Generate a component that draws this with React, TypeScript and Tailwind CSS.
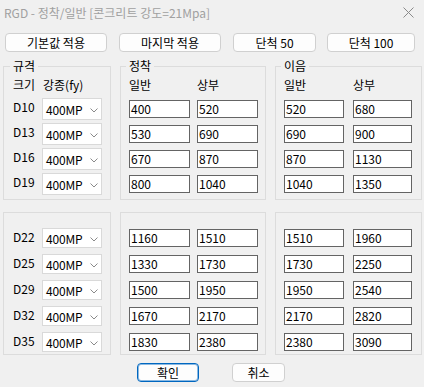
import React from 'react';

type Row = { d: string; a: [number, number]; b: [number, number] };

const upperRows: Row[] = [
  { d: 'D10', a: [400, 520], b: [520, 680] },
  { d: 'D13', a: [530, 690], b: [690, 900] },
  { d: 'D16', a: [670, 870], b: [870, 1130] },
  { d: 'D19', a: [800, 1040], b: [1040, 1350] },
];

const lowerRows: Row[] = [
  { d: 'D22', a: [1160, 1510], b: [1510, 1960] },
  { d: 'D25', a: [1330, 1730], b: [1730, 2250] },
  { d: 'D29', a: [1500, 1950], b: [1950, 2540] },
  { d: 'D32', a: [1670, 2170], b: [2170, 2820] },
  { d: 'D35', a: [1830, 2380], b: [2380, 3090] },
];

const Combo: React.FC<{ tall?: boolean }> = ({ tall }) => (
  <div
    className={`flex w-[60px] items-center justify-between border border-[#d9d9d9] bg-white pl-[3px] pr-[3px] ${
      tall ? 'h-[22px]' : 'h-[20px]'
    }`}
  >
    <span className="pt-[2px] leading-none tracking-[-0.2px]">400MP</span>
    <svg width="8" height="5" viewBox="0 0 8 5" className="mt-[3px]">
      <path d="M0.5 0.5 L4 4 L7.5 0.5" stroke="#8a8a8a" fill="none" strokeWidth="1" />
    </svg>
  </div>
);

const Edit: React.FC<{ value: number; w?: string }> = ({ value, w = 'w-[61px]' }) => (
  <div className={`flex h-[18px] ${w} items-center border border-[#646464] bg-white pl-[1px] leading-none`}>
    {value}
  </div>
);

const TopButton: React.FC<{ label: string; w: string }> = ({ label, w }) => (
  <button className={`h-[19px] ${w} rounded-[4px] border border-[#d0d0d0] bg-[#fdfdfd] leading-none text-black`}>
    {label}
  </button>
);

export default function App() {
  return (
    <div className="h-[387px] w-[424px] overflow-hidden bg-[#f0f0f0] font-['Noto_Sans_CJK_KR',sans-serif] text-[12px] text-black">
      {/* title bar */}
      <div className="flex h-[25px] items-center justify-between pl-[4px] pr-[10px] text-[#a0a0a0]">
        <span>RGD - 정착/일반 [콘크리트 강도=21Mpa]</span>
        <svg width="11" height="11" viewBox="0 0 11 11">
          <path d="M0.5 0.5 L10.5 10.5 M10.5 0.5 L0.5 10.5" stroke="#8a8a8a" strokeWidth="1" />
        </svg>
      </div>

      {/* preset buttons */}
      <div className="mt-[8px] flex pl-[5px]">
        <TopButton label="기본값 적용" w="w-[102px]" />
        <div className="ml-[12px]">
          <TopButton label="마지막 적용" w="w-[102px]" />
        </div>
        <div className="ml-[12px]">
          <TopButton label="단척 50" w="w-[83px]" />
        </div>
        <div className="ml-[11px]">
          <TopButton label="단척 100" w="w-[88px]" />
        </div>
      </div>

      {/* upper groups */}
      <div className="mt-[6px] flex gap-[9px] pl-[3px]">
        <fieldset className="h-[142px] w-[108px] border border-[#dcdcdc] pl-[9px]">
          <legend className="-ml-[3px] px-[3px] leading-[16px]">규격</legend>
          <div className="mt-[3px] flex h-[16px] items-center">
            <span className="w-[30px]">크기</span>
            <span>강종(fy)</span>
          </div>
          <div className="mt-[5px] flex flex-col gap-[3px]">
            {upperRows.map((r) => (
              <div key={r.d} className="flex h-[22px] items-center">
                <span className="w-[29px] pb-[4px]">{r.d}</span>
                <Combo tall />
              </div>
            ))}
          </div>
        </fieldset>

        <fieldset className="h-[142px] w-[146px] border border-[#dcdcdc] pl-[8px]">
          <legend className="-ml-[3px] px-[3px] leading-[16px]">정착</legend>
          <div className="mt-[3px] flex h-[16px] items-center">
            <span className="w-[68px]">일반</span>
            <span>상부</span>
          </div>
          <div className="mt-[5px] flex flex-col gap-[3px]">
            {upperRows.map((r) => (
              <div key={r.d} className="flex h-[22px] items-center gap-[7px]">
                <Edit value={r.a[0]} />
                <Edit value={r.a[1]} />
              </div>
            ))}
          </div>
        </fieldset>

        <fieldset className="h-[142px] w-[147px] border border-[#dcdcdc] pl-[8px]">
          <legend className="-ml-[3px] px-[3px] leading-[16px]">이음</legend>
          <div className="mt-[3px] flex h-[16px] items-center">
            <span className="w-[69px]">일반</span>
            <span>상부</span>
          </div>
          <div className="mt-[5px] flex flex-col gap-[3px]">
            {upperRows.map((r) => (
              <div key={r.d} className="flex h-[22px] items-center gap-[9px]">
                <Edit value={r.b[0]} w="w-[60px]" />
                <Edit value={r.b[1]} w="w-[59px]" />
              </div>
            ))}
          </div>
        </fieldset>
      </div>

      {/* lower groups */}
      <div className="mt-[12px] flex gap-[9px] pl-[3px]">
        <div className="flex h-[143px] w-[108px] flex-col gap-[6px] border border-[#dcdcdc] pl-[9px] pt-[15px]">
          {lowerRows.map((r) => (
            <div key={r.d} className="flex h-[20px] items-center">
              <span className="w-[29px] pb-[3px]">{r.d}</span>
              <Combo />
            </div>
          ))}
        </div>
        <div className="flex h-[143px] w-[146px] flex-col gap-[6px] border border-[#dcdcdc] pl-[8px] pt-[15px]">
          {lowerRows.map((r) => (
            <div key={r.d} className="flex h-[20px] items-center gap-[7px]">
              <Edit value={r.a[0]} />
              <Edit value={r.a[1]} />
            </div>
          ))}
        </div>
        <div className="flex h-[143px] w-[147px] flex-col gap-[6px] border border-[#dcdcdc] pl-[8px] pt-[15px]">
          {lowerRows.map((r) => (
            <div key={r.d} className="flex h-[20px] items-center gap-[9px]">
              <Edit value={r.b[0]} w="w-[60px]" />
              <Edit value={r.b[1]} w="w-[59px]" />
            </div>
          ))}
        </div>
      </div>

      {/* dialog buttons */}
      <div className="mt-[8px] flex gap-[33px] pl-[137px]">
        <button className="h-[19px] w-[62px] rounded-[4px] border border-[#0067c0] bg-[#fdfdfd] leading-none shadow-[inset_0_0_0_1px_rgba(0,103,192,0.45)]">
          확인
        </button>
        <button className="h-[19px] w-[53px] rounded-[4px] border border-[#d0d0d0] bg-[#fdfdfd] leading-none">
          취소
        </button>
      </div>
    </div>
  );
}
